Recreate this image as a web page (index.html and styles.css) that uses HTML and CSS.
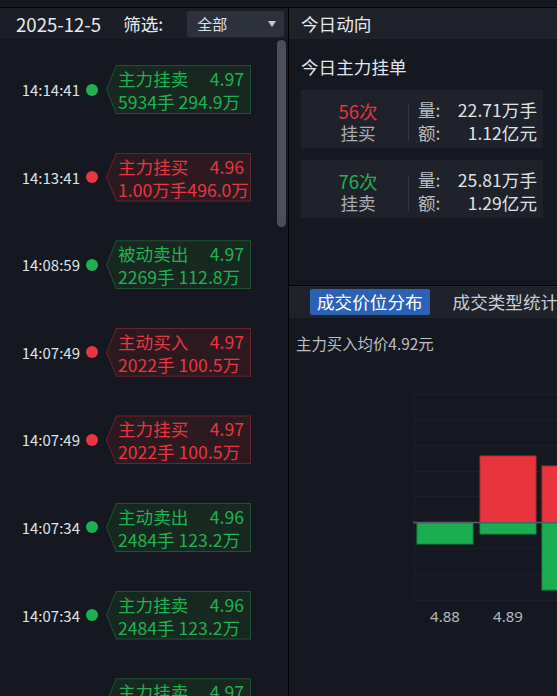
FILE: index.html
```html
<!DOCTYPE html>
<html lang="zh-CN">
<head>
<meta charset="utf-8">
<title>主力动向</title>
<link rel="stylesheet" href="styles.css">
</head>
<body>
<div class="topstrip"></div>
<div class="main">
  <div class="left">
    <div class="lhead">
      <span class="date">2025-12-5</span>
      <span class="filter-label">筛选:</span>
      <div class="select"><span>全部</span><span class="caret"></span></div>
    </div>
    <div class="list">
      <div class="scrollbar"></div>
      <div class="item g"><span class="time">14:14:41</span><span class="dot"></span>
        <div class="tag"><div class="tag-in"><div class="row1"><span>主力挂卖</span><span>4.97</span></div><div class="row2">5934手 294.9万</div></div></div></div>
      <div class="item r"><span class="time">14:13:41</span><span class="dot"></span>
        <div class="tag"><div class="tag-in"><div class="row1"><span>主力挂买</span><span>4.96</span></div><div class="row2">1.00万手496.0万</div></div></div></div>
      <div class="item g"><span class="time">14:08:59</span><span class="dot"></span>
        <div class="tag"><div class="tag-in"><div class="row1"><span>被动卖出</span><span>4.97</span></div><div class="row2">2269手 112.8万</div></div></div></div>
      <div class="item r"><span class="time">14:07:49</span><span class="dot"></span>
        <div class="tag"><div class="tag-in"><div class="row1"><span>主动买入</span><span>4.97</span></div><div class="row2">2022手 100.5万</div></div></div></div>
      <div class="item r"><span class="time">14:07:49</span><span class="dot"></span>
        <div class="tag"><div class="tag-in"><div class="row1"><span>主力挂买</span><span>4.97</span></div><div class="row2">2022手 100.5万</div></div></div></div>
      <div class="item g"><span class="time">14:07:34</span><span class="dot"></span>
        <div class="tag"><div class="tag-in"><div class="row1"><span>主动卖出</span><span>4.96</span></div><div class="row2">2484手 123.2万</div></div></div></div>
      <div class="item g"><span class="time">14:07:34</span><span class="dot"></span>
        <div class="tag"><div class="tag-in"><div class="row1"><span>主力挂卖</span><span>4.96</span></div><div class="row2">2484手 123.2万</div></div></div></div>
      <div class="item g"><span class="time">14:07:20</span><span class="dot"></span>
        <div class="tag"><div class="tag-in"><div class="row1"><span>主力挂卖</span><span>4.97</span></div><div class="row2">2484手 123.4万</div></div></div></div>
    </div>
  </div>
  <div class="right">
    <div class="rhead">今日动向</div>
    <div class="today">
      <div class="today-title">今日主力挂单</div>
      <div class="cards">
        <div class="card">
          <div class="card-left"><span class="count red">56次</span><span class="kind">挂买</span></div>
          <div class="divider"></div>
          <div class="card-right">
            <div class="kv"><span class="k">量:</span><span class="v">22.71万手</span></div>
            <div class="kv"><span class="k">额:</span><span class="v">1.12亿元</span></div>
          </div>
        </div>
        <div class="card">
          <div class="card-left"><span class="count green">76次</span><span class="kind">挂卖</span></div>
          <div class="divider"></div>
          <div class="card-right">
            <div class="kv"><span class="k">量:</span><span class="v">25.81万手</span></div>
            <div class="kv"><span class="k">额:</span><span class="v">1.29亿元</span></div>
          </div>
        </div>
      </div>
    </div>
    <div class="tabs">
      <div class="tab active">成交价位分布</div>
      <div class="tab">成交类型统计</div>
    </div>
    <div class="chart">
      <div class="avg">主力买入均价4.92元</div>
      <svg class="chart-svg" width="268" height="342" viewBox="0 0 268 342">
        <g stroke="#1c1f28" stroke-width="1">
          <line x1="125" y1="41.5" x2="268" y2="41.5"/>
          <line x1="125" y1="66.5" x2="268" y2="66.5"/>
          <line x1="125" y1="92.5" x2="268" y2="92.5"/>
          <line x1="125" y1="118.5" x2="268" y2="118.5"/>
          <line x1="125" y1="143.5" x2="268" y2="143.5"/>
          <line x1="125" y1="195.5" x2="268" y2="195.5"/>
          <line x1="125" y1="221.5" x2="268" y2="221.5"/>
          <line x1="125" y1="247.5" x2="268" y2="247.5"/>
          <line x1="125.5" y1="41" x2="125.5" y2="247"/>
        </g>
        <rect x="128" y="170" width="56" height="21" fill="#1aae50" stroke="#158a40" stroke-width="1"/>
        <rect x="191" y="103" width="56" height="67" fill="#e8343d" stroke="#b92a33" stroke-width="1"/>
        <rect x="191" y="170" width="56" height="11" fill="#1aae50" stroke="#158a40" stroke-width="1"/>
        <rect x="253" y="113" width="56" height="57" fill="#e8343d" stroke="#b92a33" stroke-width="1"/>
        <rect x="253" y="170" width="56" height="67" fill="#1aae50" stroke="#158a40" stroke-width="1"/>
        <line x1="124" y1="169.5" x2="268" y2="169.5" stroke="#5a5e69" stroke-width="1.5"/>
        <text x="156" y="269" class="axis-label" text-anchor="middle">4.88</text>
        <text x="219" y="269" class="axis-label" text-anchor="middle">4.89</text>
      </svg>
    </div>
  </div>
</div>
</body>
</html>
```
FILE: styles.css
```css
html, body {
  margin: 0;
  padding: 0;
}
body {
  width: 557px;
  height: 696px;
  overflow: hidden;
  background: #151820;
  font-family: "Noto Sans CJK SC", "Noto Sans", sans-serif;
  color: #e4e7ee;
}
.topstrip {
  height: 7px;
  background: #14171e;
  border-bottom: 1px solid #04050a;
}
.main {
  display: flex;
  height: 688px;
}
.left {
  width: 288px;
  flex-shrink: 0;
  border-right: 1px solid #000;
  background: #151820;
  display: flex;
  flex-direction: column;
}
.lhead {
  height: 31px;
  flex-shrink: 0;
  background: #1b1e26;
  display: flex;
  align-items: center;
  padding-left: 16px;
  font-size: 17.6px;
  color: #e6e9ef;
  white-space: nowrap;
}
.date {
  font-size: 18.6px;
}
.filter-label {
  margin-left: 22px;
}
.select {
  margin-left: 24px;
  width: 97px;
  height: 26px;
  box-sizing: border-box;
  background: #2c313c;
  border-radius: 2px;
  display: flex;
  align-items: center;
  padding-left: 10px;
  font-size: 15px;
  color: #dfe2e9;
}
.caret {
  margin-left: auto;
  margin-right: 8px;
  width: 0;
  height: 0;
  border-left: 4px solid transparent;
  border-right: 4px solid transparent;
  border-top: 6px solid #c5c9d2;
}
.list {
  position: relative;
  flex: 1;
  display: flex;
  flex-direction: column;
  gap: 38.6px;
  padding-top: 26px;
  overflow: hidden;
}
.scrollbar {
  position: absolute;
  left: 277px;
  top: 1px;
  width: 9px;
  height: 187px;
  border-radius: 5px;
  background: #4b4e5b;
}
.item {
  display: flex;
  align-items: center;
  flex-shrink: 0;
}
.time {
  width: 80px;
  text-align: right;
  font-size: 15px;
  color: #dde2ea;
}
.dot {
  width: 12px;
  height: 12px;
  border-radius: 50%;
  margin-left: 6px;
}
.tag {
  margin-left: 8px;
  width: 145px;
  height: 49px;
  padding: 1px;
  box-sizing: border-box;
  clip-path: polygon(10px 0, 100% 0, 100% 100%, 10px 100%, 0 50%);
}
.tag-in {
  height: 100%;
  box-sizing: border-box;
  clip-path: polygon(9.7px 0, 100% 0, 100% 100%, 9.7px 100%, 0 50%);
  padding: 1px 6px 0 11px;
  font-size: 17.6px;
  line-height: 23px;
  white-space: nowrap;
}
.row1 {
  display: flex;
  justify-content: space-between;
}
.g .dot { background: #1bb152; }
.g .tag { background: #1d5332; }
.g .tag-in { background: #16281f; color: #1fb24f; }
.r .dot { background: #e8353f; }
.r .tag { background: #652530; }
.r .tag-in { background: #2c1a20; color: #e8353f; }

.right {
  flex: 1;
  min-width: 0;
  display: flex;
  flex-direction: column;
  overflow: hidden;
}
.rhead {
  height: 31px;
  flex-shrink: 0;
  background: #1f222a;
  padding-left: 12px;
  display: flex;
  align-items: center;
  font-size: 17.6px;
  color: #e6e9f0;
}
.today {
  height: 247px;
  flex-shrink: 0;
  box-sizing: border-box;
  border-bottom: 1px solid #000;
  padding: 16px 14px 0 12px;
}
.today-title {
  font-size: 17.6px;
  line-height: 24px;
  color: #e2e5ec;
}
.cards {
  margin-top: 11px;
  display: flex;
  flex-direction: column;
  gap: 12px;
}
.card {
  height: 58px;
  background: #1f222a;
  display: flex;
  align-items: flex-start;
}
.card-left {
  width: 107px;
  box-sizing: border-box;
  padding-left: 7px;
  padding-top: 10px;
  display: flex;
  flex-direction: column;
  align-items: center;
}
.count {
  font-size: 18.5px;
  line-height: 22px;
}
.kind {
  font-size: 17.6px;
  line-height: 22px;
  color: #a9adb7;
}
.red { color: #e8353f; }
.green { color: #1fb24f; }
.divider {
  width: 1px;
  height: 36px;
  margin-top: 15px;
  background: #33374a;
}
.card-right {
  flex: 1;
  padding: 8px 6px 0 9px;
}
.kv {
  display: flex;
  justify-content: space-between;
  font-size: 17.6px;
  line-height: 23px;
}
.k { color: #b9bdc6; }
.v { color: #dde1e8; }
.tabs {
  height: 32px;
  flex-shrink: 0;
  background: #1f222a;
  display: flex;
  align-items: center;
  padding-left: 21px;
  gap: 16px;
  white-space: nowrap;
}
.tab {
  height: 26px;
  padding: 0 7px;
  font-size: 17.6px;
  line-height: 26px;
  color: #c9cdd5;
  flex-shrink: 0;
}
.tab.active {
  background: #2b62b6;
  color: #ffffff;
  border-radius: 2px;
}
.chart {
  padding: 15px 0 0 7px;
}
.avg {
  font-size: 15.4px;
  line-height: 20px;
  color: #b9bdc6;
}
.chart-svg {
  display: block;
  margin-left: -7px;
}
.axis-label {
  font-family: "Noto Sans", "Noto Sans CJK SC", sans-serif;
  font-size: 15px;
  fill: #b3b7c0;
}
```
